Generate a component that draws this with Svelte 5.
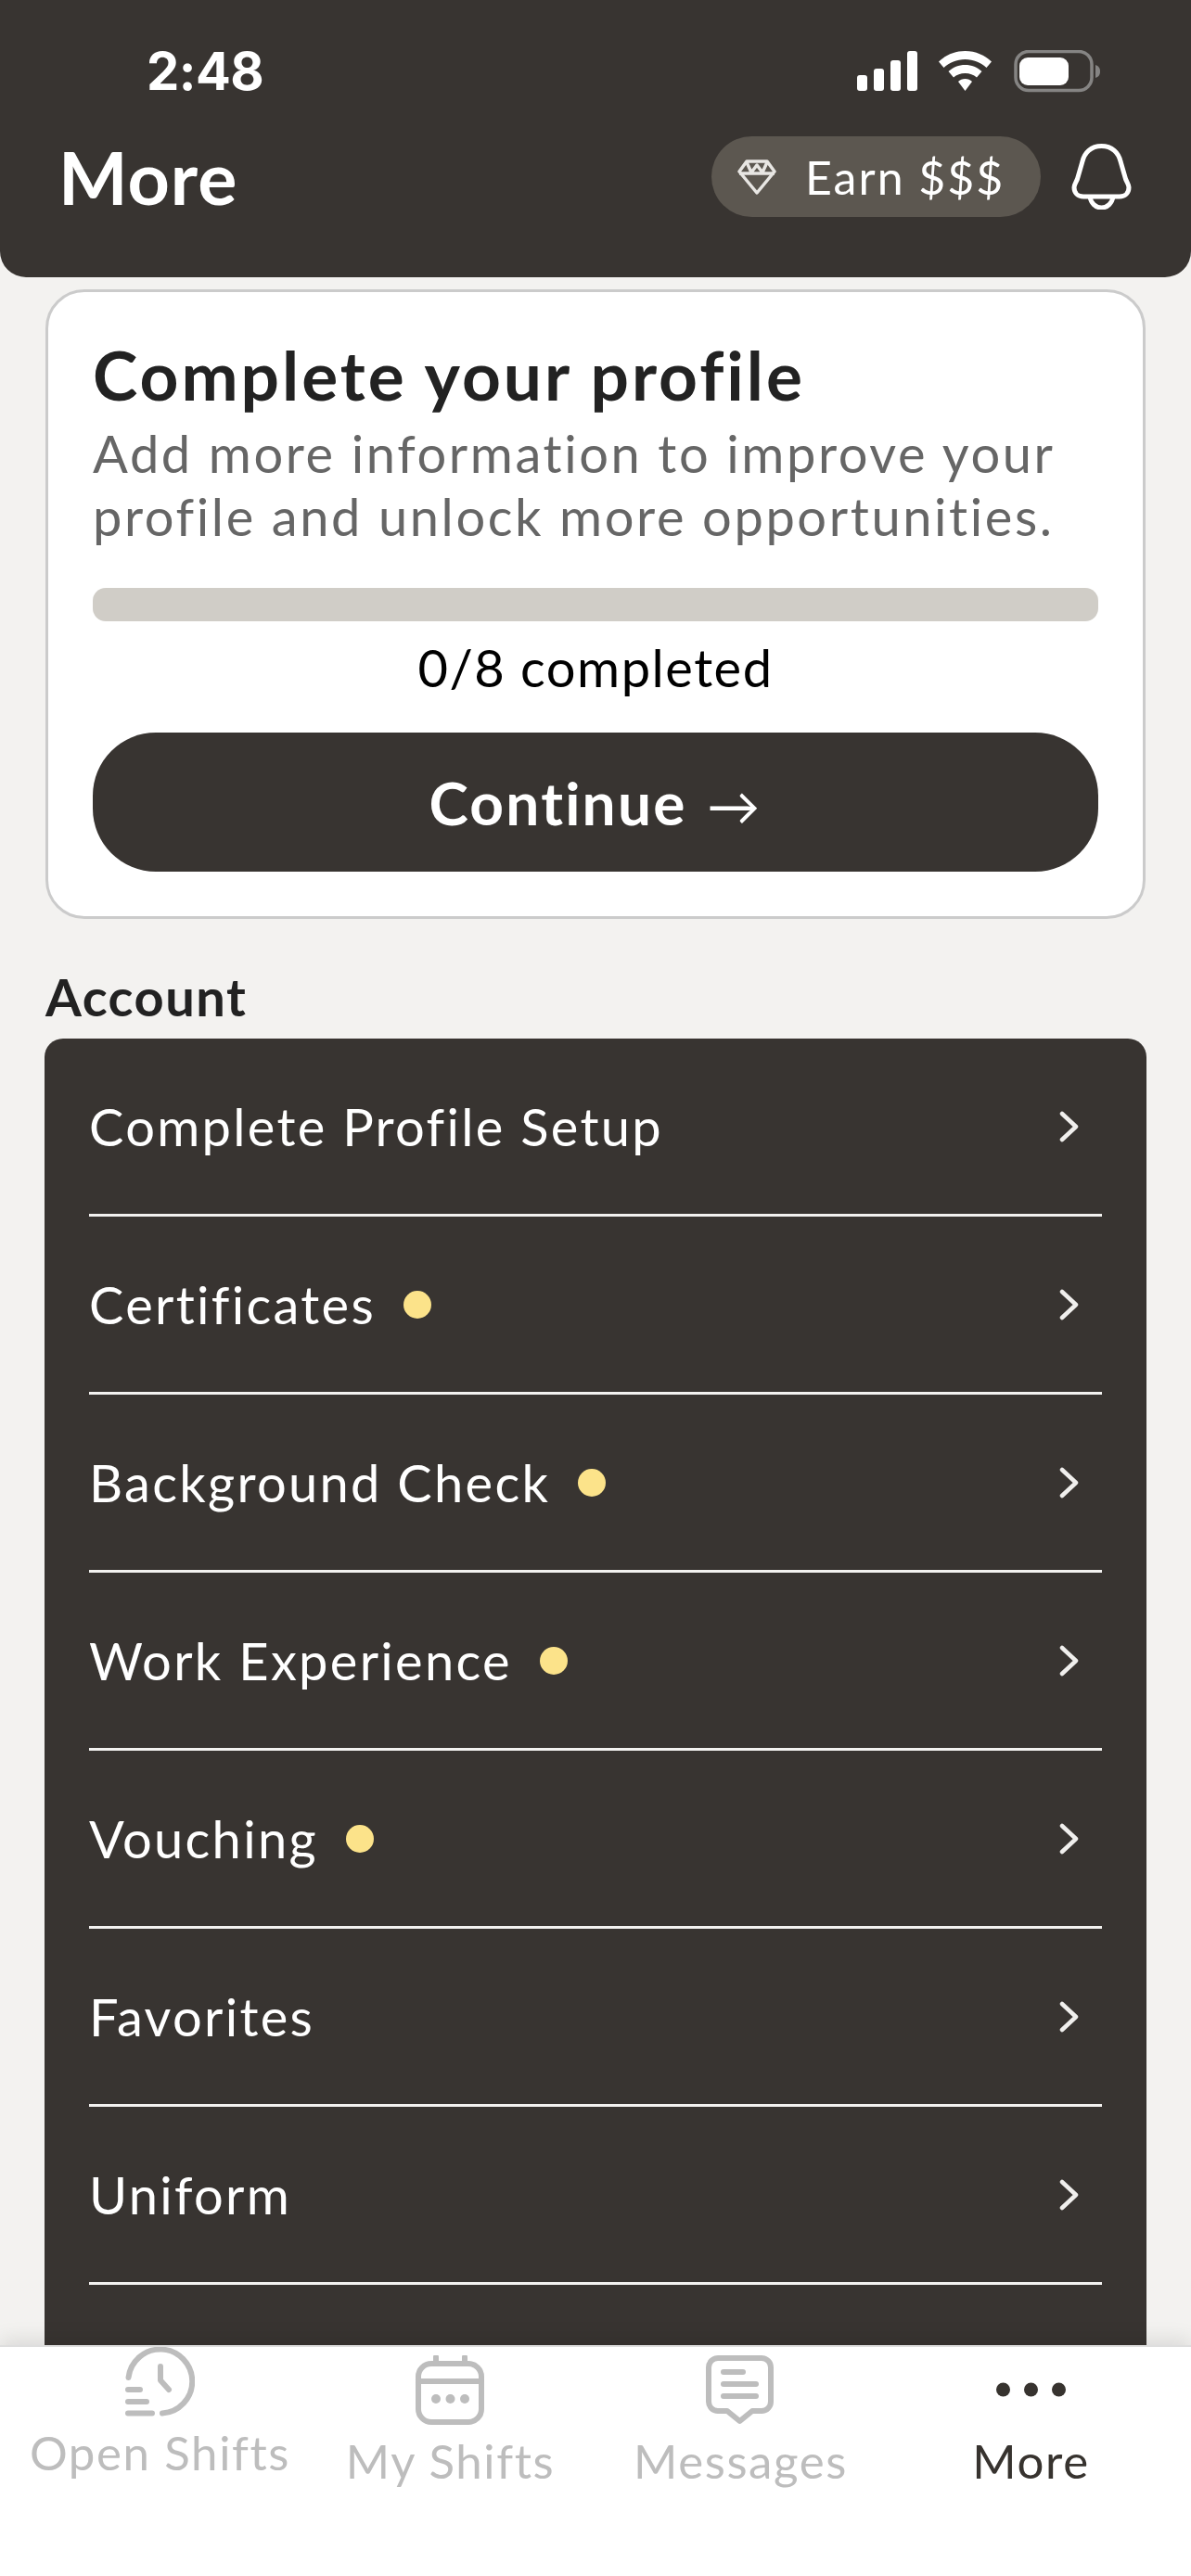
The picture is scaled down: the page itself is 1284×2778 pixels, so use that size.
<script>
	const rows = [
		{ name: 'Complete Profile Setup' },
		{ name: 'Certificates', dot: true },
		{ name: 'Background Check', dot: true },
		{ name: 'Work Experience', dot: true },
		{ name: 'Vouching', dot: true },
		{ name: 'Favorites' },
		{ name: 'Uniform' },
	]
</script>


<div class="page">
	<header>
		<div class="status">
			<span class="time">2:48</span>

			<svg class="status-icons" width="263" height="46" viewBox="0 0 263 46">
				<g fill="#fff">
					<rect x="0" y="27" width="11" height="17" rx="3" />
					<rect x="18" y="20" width="11" height="24" rx="3" />
					<rect x="36" y="11" width="11" height="33" rx="3" />
					<rect x="54" y="1" width="11" height="43" rx="3" />
					<path d="M116.5 1C105 1 95.500 5.500 88 12.500L93.500 19C99.500 13.500 107.500 10 116.500 10C125.500 10 133.500 13.500 139.500 19L145 12.500C137.500 5.500 128 1 116.500 1Z" />
					<path d="M116.500 16C109.500 16 103.500 18.500 98.500 23L104 29.500C107.500 26.500 111.500 25 116.500 25C121.500 25 125.500 26.500 129 29.500L134.500 23C129.500 18.500 123.500 16 116.500 16Z" />
					<path d="M116.500 31C113.500 31 111 32 109 34L116.500 44L124 34C122 32 119.500 31 116.500 31Z" />
				</g>
				<rect x="171" y="1.500" width="82" height="42" rx="14" fill="none" stroke="#858483" stroke-width="3.500" />
				<rect x="175" y="8" width="53" height="30" rx="9" fill="#fff" />
				<path d="M257 16C260 17 262 19 262 23C262 27 260 29 257 30Z" fill="#858483" />
			</svg>
		</div>

		<div class="bar">
			<h1>More</h1>

			<button class="earn">
				<svg width="42" height="38" viewBox="0 0 42 38" fill="none" stroke="#e8e6e3" stroke-width="3.500" stroke-linejoin="round">
					<path d="M10 2H32L40 13L21 36L2 13Z" />
					<path d="M2 15H40M10 3L15 14L21 6L27 14L32 3" />
				</svg>
				<span>Earn $$$</span>
			</button>

			<svg class="bell" width="65" height="71" viewBox="0 0 65 71" fill="none" stroke="#fff" stroke-width="5">
				<path d="M32.500 2.500C21 2.500 14 10 12 19L6.500 38C5 42 3 44 3 47C3 53 7 57 13 57H52C58 57 62 53 62 47C62 44 60 42 58.500 38L53 19C51 10 44 2.500 32.500 2.500Z" />
				<path d="M20 57C21 64 26 69 32.500 69C39 69 44 64 45 57" />
			</svg>
		</div>
	</header>

	<main>
		<section class="card">
			<h2>Complete your profile</h2>
			<p>Add more information to improve your<br />profile and unlock more opportunities.</p>

			<div class="progress"></div>
			<div class="count">0/8 completed</div>

			<button class="continue">Continue <span class="arrow">→</span></button>
		</section>

		<h3>Account</h3>

		<ul>
			{#each rows as row}
				<li>
					<span>{row.name}</span>
					{#if row.dot}
						<i class="dot"></i>
					{/if}
					<svg class="chevron" width="22" height="34" viewBox="0 0 22 34" fill="none" stroke="#f0efed" stroke-width="4.500" stroke-linecap="round" stroke-linejoin="round">
						<path d="M3 3L18 17L3 31" />
					</svg>
				</li>
			{/each}
		</ul>
	</main>

	<nav>
		<div class="tab raised">
			<svg width="75" height="75" viewBox="0 0 75 75" fill="none" stroke="#bdbdbd" stroke-width="6" stroke-linecap="round" stroke-linejoin="round">
				<path d="M3.500 33A34.500 34.500 0 1 1 40 71.500" />
				<path d="M38 21V36L47 46" />
				<path d="M3 46H16M3 59H23M3 71.500H29" />
			</svg>
			<span>Open Shifts</span>
		</div>

		<div class="tab">
			<svg width="75" height="75" viewBox="0 0 75 75" fill="none" stroke="#bdbdbd" stroke-width="6" stroke-linecap="round">
				<rect x="3" y="9" width="68" height="63" rx="14" />
				<path d="M3 28H71M22 2V9M53 2V9" />
				<g fill="#bdbdbd" stroke="none">
					<circle cx="22" cy="47" r="5" />
					<circle cx="37.500" cy="47" r="5" />
					<circle cx="53" cy="47" r="5" />
				</g>
			</svg>
			<span>My Shifts</span>
		</div>

		<div class="tab">
			<svg width="75" height="75" viewBox="0 0 75 75" fill="none" stroke="#bdbdbd" stroke-width="6" stroke-linecap="round" stroke-linejoin="round">
				<path d="M13 3H60A10 10 0 0 1 70 13V50A10 10 0 0 1 60 60H50L36.500 71L23 60H13A10 10 0 0 1 3 50V13A10 10 0 0 1 13 3Z" />
				<path d="M19 18H40M19 31H54M19 44H54" />
			</svg>
			<span>Messages</span>
		</div>

		<div class="tab active">
			<svg width="75" height="75" viewBox="0 0 75 75" fill="#37332f">
				<circle cx="7.500" cy="37" r="7.500" />
				<circle cx="37.500" cy="37" r="7.500" />
				<circle cx="67.500" cy="37" r="7.500" />
			</svg>
			<span>More</span>
		</div>
	</nav>
</div>


<style>
	:global(body) {
		background: #f3f2f0;
	}

	.page {
		width: 1284px;
		height: 2778px;
		display: flex;
		flex-direction: column;
		overflow: hidden;
		background: #f3f2f0;
		font-family: Lato, "Open Sans", sans-serif;
	}

	header {
		height: 299px;
		flex: none;
		box-sizing: border-box;
		padding: 54px 0 0;
		background: #383431;
		border-radius: 0 0 28px 28px;
		color: #fff;
	}

	.status {
		display: flex;
		justify-content: space-between;
		align-items: center;
		padding: 0 97px 0 158px;
	}

	.time {
		font-family: Inter, sans-serif;
		font-size: 56px;
		font-weight: 700;
		line-height: 46px;
		letter-spacing: -0.500px;
	}

	.bar {
		display: flex;
		align-items: center;
		margin-top: 47px;
		padding: 0 64px 0 63px;
	}

	h1 {
		flex: 1;
		margin: 0;
		font-size: 79px;
		font-weight: 700;
		line-height: 87px;
		letter-spacing: 1px;
	}

	.earn {
		display: flex;
		align-items: center;
		gap: 31px;
		width: 355px;
		height: 87px;
		box-sizing: border-box;
		padding: 0 0 0 28px;
		border: 0;
		border-radius: 44px;
		background: #5c5750;
		color: #fff;
		font: inherit;
		font-size: 50px;
		letter-spacing: 2px;
	}

	.bell {
		margin-left: 33px;
	}

	main {
		flex: 1;
		min-height: 0;
		display: flex;
		flex-direction: column;
		padding: 13px 48px 0 48px;
	}

	.card {
		flex: none;
		box-sizing: border-box;
		height: 679px;
		margin: 0 1px;
		padding: 50px 48px 0;
		border: 3px solid #cbcbcb;
		border-radius: 42px;
		background: #fff;
	}

	h2 {
		margin: 0;
		color: #222;
		font-size: 73px;
		font-weight: 700;
		line-height: 78px;
		letter-spacing: 3px;
	}

	p {
		margin: 12px 0 0;
		color: #666;
		font-size: 56px;
		line-height: 68px;
		letter-spacing: 2.600px;
	}

	.progress {
		height: 36px;
		margin-top: 43px;
		border-radius: 14px;
		background: #d0cdc7;
	}

	.count {
		margin-top: 19px;
		color: #000;
		font-size: 56px;
		line-height: 62px;
		letter-spacing: 1.500px;
		text-align: center;
	}

	.continue {
		display: block;
		width: 100%;
		height: 150px;
		margin-top: 39px;
		border: 0;
		border-radius: 68px;
		background: #383431;
		color: #fff;
		font: inherit;
		font-size: 64px;
		font-weight: 700;
		letter-spacing: 2.200px;
	}

	.arrow {
		margin-left: 4px;
		font-size: 57px;
		font-weight: 400;
	}

	h3 {
		flex: none;
		margin: 54px 0 0 1px;
		color: #222;
		font-size: 56px;
		font-weight: 700;
		line-height: 60px;
		letter-spacing: 1.500px;
	}

	ul {
		flex: 1;
		margin: 15px 0 0;
		padding: 0 48px;
		border-radius: 20px 20px 0 0;
		background: #383431;
		list-style: none;
	}

	li {
		height: 189px;
		display: flex;
		align-items: center;
		padding-right: 24px;
		border-bottom: 3px solid #f3f2f0;
		color: #fff;
		font-size: 56px;
		letter-spacing: 2.300px;
	}

	.dot {
		width: 30px;
		height: 30px;
		margin-left: 30px;
		border-radius: 50%;
		background: #fce38a;
	}

	.chevron {
		margin-left: auto;
	}

	nav {
		position: relative;
		flex: none;
		height: 249px;
		box-sizing: border-box;
		display: grid;
		grid-template-columns: repeat(4, 1fr);
		padding: 0 16px;
		border-top: 2px solid #dedede;
		background: #fff;
		box-shadow: 0 -6px 20px rgba(0, 0, 0, 0.1);
	}

	.tab {
		display: flex;
		flex-direction: column;
		align-items: center;
		padding-top: 9px;
		color: #bdbdbd;
		font-size: 51px;
		letter-spacing: 1.600px;
	}

	.tab.raised {
		padding-top: 0;
	}

	.tab span {
		margin-top: 9px;
		line-height: 60px;
	}

	.tab.active {
		color: #37332f;
	}
</style>
